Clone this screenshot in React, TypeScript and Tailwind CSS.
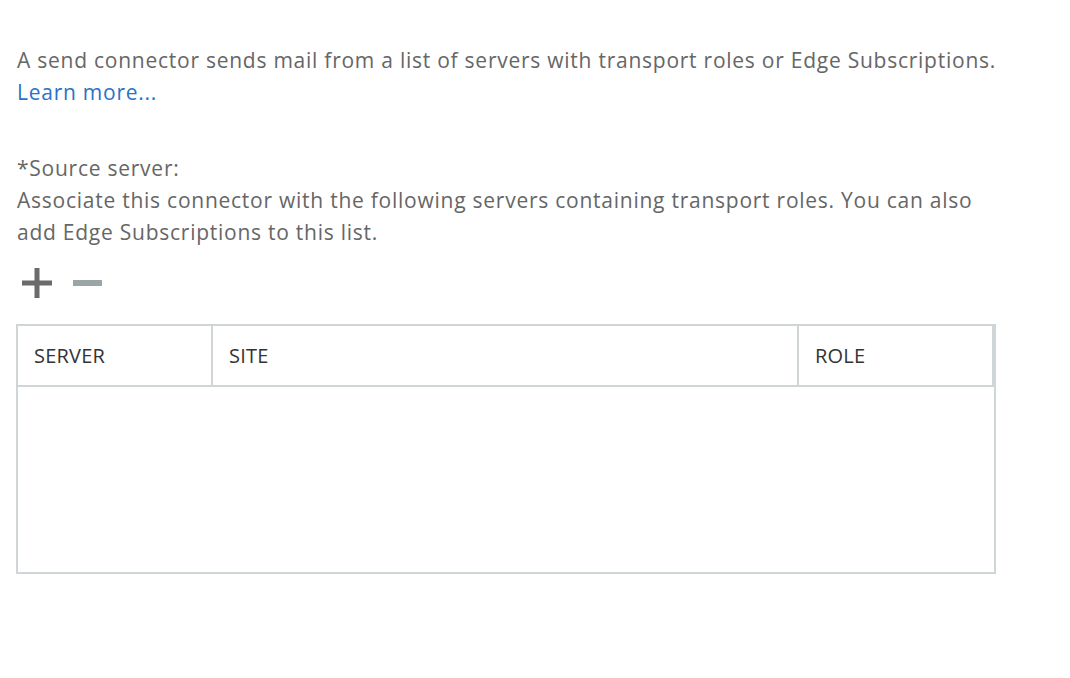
import React from 'react';

const font = { fontFamily: '"Open Sans", "Noto Sans", sans-serif' };

function PlusIcon() {
  return (
    <svg width="30" height="30" viewBox="0 0 30 30" aria-label="Add">
      <rect x="12.5" y="0" width="5" height="30" fill="#6b6b6b" />
      <rect x="0" y="12.5" width="30" height="5" fill="#6b6b6b" />
    </svg>
  );
}

function MinusIcon() {
  return (
    <svg width="30" height="30" viewBox="0 0 30 30" aria-label="Remove">
      <rect x="0" y="12" width="29" height="6" fill="#9ba5a7" />
    </svg>
  );
}

export default function App() {
  return (
    <div
      className="w-[1070px] h-[678px] bg-white text-[#666666] text-[21px] tracking-[0.75px] leading-[32px] pl-[17px] pt-[44px]"
      style={font}
    >
      <p className="whitespace-nowrap">
        A send connector sends mail from a list of servers with transport roles or Edge Subscriptions.
      </p>
      <a className="text-[#2a72c6] block w-fit">Learn more...</a>

      <div className="mt-[44px]">
        <p>*Source server:</p>
        <p className="whitespace-nowrap">
          Associate this connector with the following servers containing transport roles. You can also
          <br />
          add Edge Subscriptions to this list.
        </p>
      </div>

      <div className="flex items-center gap-[21px] mt-[20px] ml-[5px]">
        <button className="p-0"><PlusIcon /></button>
        <button className="p-0"><MinusIcon /></button>
      </div>

      <div className="mt-[26px] w-[980px] h-[250px] border-2 border-[#d0d5d8] -ml-[1px] flex flex-col tracking-[0.2px]">
        <div className="flex h-[61px] border-b-2 border-[#d0d5d8] text-[#333333] text-[20px]">
          <div className="w-[195px] flex items-center pl-[16px] border-r-2 border-[#d0d5d8]">SERVER</div>
          <div className="w-[586px] flex items-center pl-[16px] border-r-2 border-[#d0d5d8]">SITE</div>
          <div className="flex-1 flex items-center pl-[16px] border-r-2 border-[#d0d5d8]">ROLE</div>
        </div>
        <div className="flex-1" />
      </div>
    </div>
  );
}
